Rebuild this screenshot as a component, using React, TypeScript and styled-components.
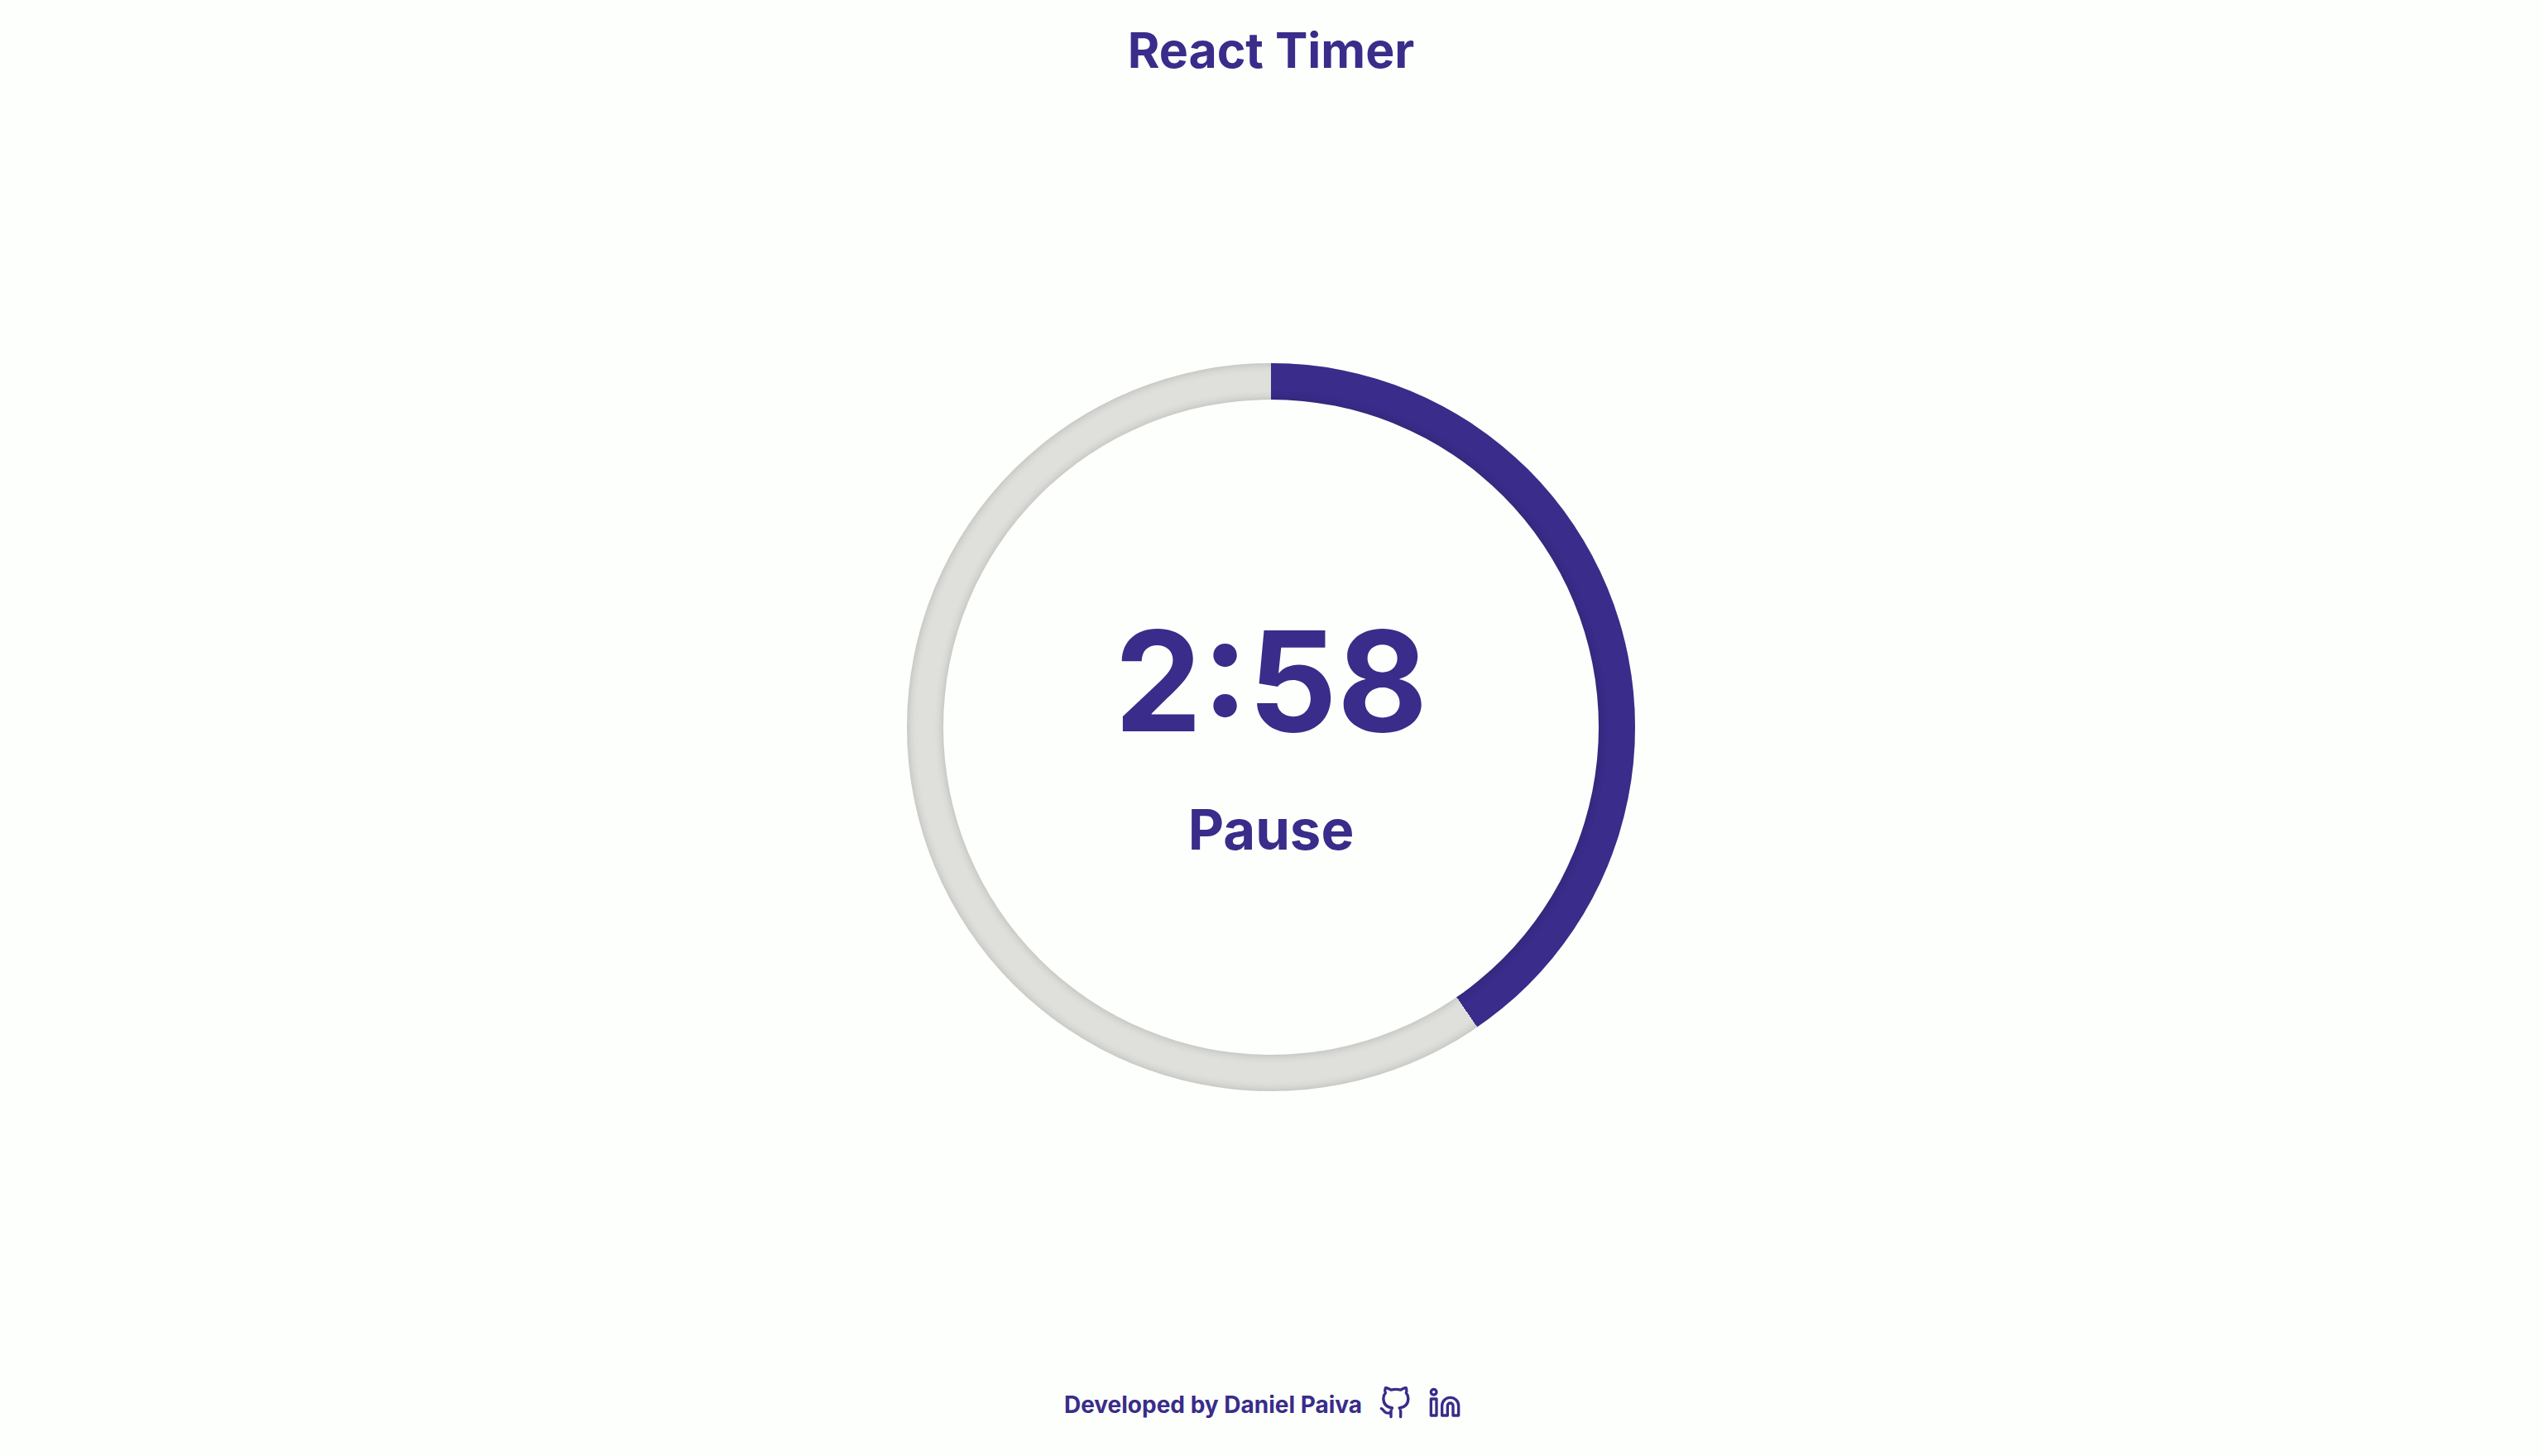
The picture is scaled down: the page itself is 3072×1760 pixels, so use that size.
import React, { useState } from "react";
import styled, { createGlobalStyle } from "styled-components";
import { FiGithub, FiLinkedin } from "react-icons/fi";

const ink = "#392c8a";
const paper = "#fdfffc";

const GlobalStyle = createGlobalStyle`
  * { box-sizing: border-box; margin: 0; padding: 0; }
  body {
    background: ${paper};
    color: ${ink};
    font-family: Inter, "Liberation Sans", sans-serif;
    font-weight: 700;
  }
`;

const Page = styled.div`
  min-height: 100vh;
  display: grid;
  grid-template-rows: 122px 1fr 124px;
  justify-items: center;
  align-items: center;
`;

const Title = styled.h1`
  font-size: 59px;
  line-height: 72px;
`;

const Dial = styled.main`
  width: 880px;
  aspect-ratio: 1;
  padding: 44px;
  border-radius: 50%;
  background: #dfdfdb;
  box-shadow: inset 0 0 12px rgba(0, 0, 0, 0.2);
  display: grid;
`;

const Sweep = styled.div<{ $degrees: number }>`
  margin: -44px;
  padding: 44px;
  border-radius: 50%;
  display: grid;
  background: conic-gradient(${ink} ${(p) => p.$degrees}deg, transparent 0);
`;

const Face = styled.div`
  border-radius: 50%;
  background: ${paper};
  box-shadow: 0 0 12px rgba(0, 0, 0, 0.2);
  display: flex;
  flex-direction: column;
  align-items: center;
  justify-content: center;
  gap: 52px;
  padding-top: 24px;
`;

const Time = styled.time`
  font-size: 168px;
  line-height: 172px;
`;

const Toggle = styled.button`
  border: 0;
  background: none;
  color: inherit;
  font: inherit;
  font-size: 67px;
  line-height: 84px;
  cursor: pointer;
`;

const Footer = styled.footer`
  display: flex;
  align-items: flex-start;
  gap: 20px;
  padding-right: 20px;
  font-size: 28px;
  line-height: 44px;
`;

const IconLink = styled.a`
  display: flex;
  color: inherit;
`;

export default function App() {
  const [running, setRunning] = useState(true);
  return (
    <>
      <GlobalStyle />
      <Page>
        <Title>React Timer</Title>
        <Dial>
          <Sweep $degrees={145.5}>
            <Face>
              <Time>2:58</Time>
              <Toggle type="button" onClick={() => setRunning(!running)}>
                {running ? "Pause" : "Start"}
              </Toggle>
            </Face>
          </Sweep>
        </Dial>
        <Footer>
          <p>Developed by Daniel Paiva</p>
          <IconLink href="#github" aria-label="GitHub">
            <FiGithub size={40} />
          </IconLink>
          <IconLink href="#linkedin" aria-label="LinkedIn">
            <FiLinkedin size={40} />
          </IconLink>
        </Footer>
      </Page>
    </>
  );
}
